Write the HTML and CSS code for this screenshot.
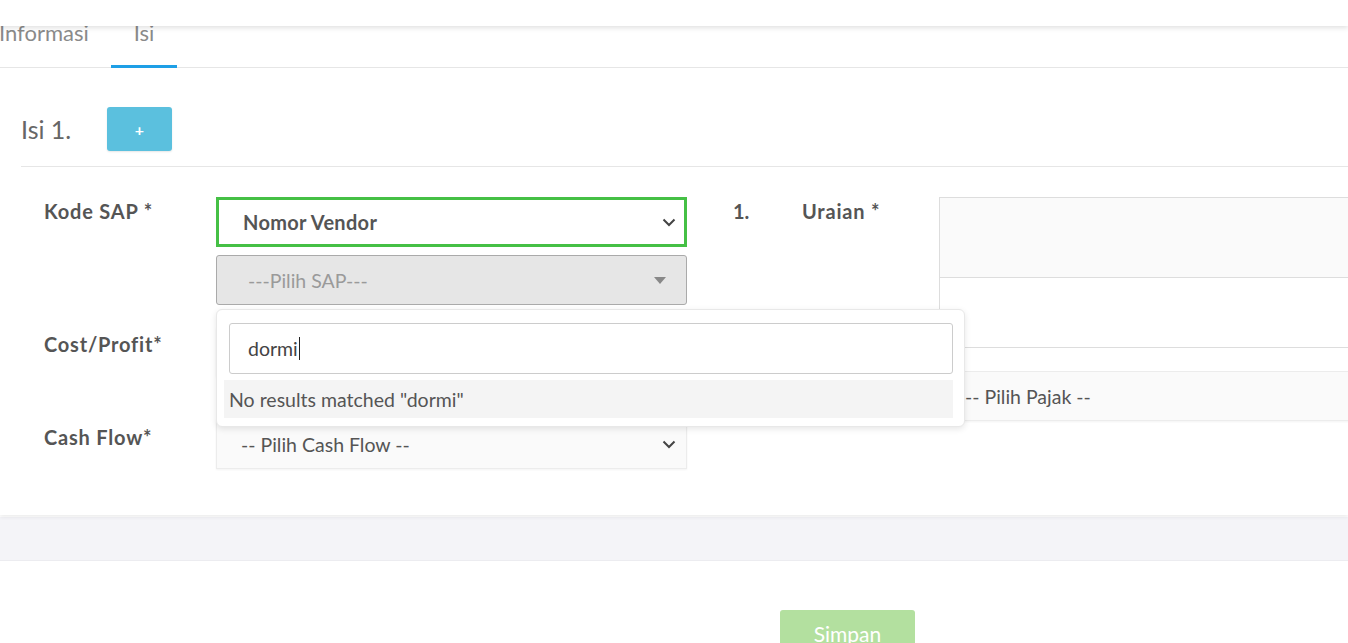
FILE: index.html
```html
<!DOCTYPE html>
<html>
<head>
<meta charset="utf-8">
<link rel="stylesheet" href="styles.css">
</head>
<body>
<div class="page">
  <div class="topbar"></div>
  <div class="card">
    <ul class="tabs">
      <li class="tab">Informasi</li>
      <li class="tab active">Isi</li>
    </ul>
    <div class="section-head">
      <h3 class="section-title">Isi 1.</h3>
      <button class="btn-add">+</button>
    </div>
    <div class="form">
      <div class="col-left">
        <div class="row row-sap">
          <label class="lbl">Kode SAP *</label>
          <div class="field">
            <div class="select select-focus">
              <span class="val-bold">Nomor Vendor</span>
              <svg class="chev" width="14" height="9" viewBox="0 0 14 9"><path d="M1.5 1.5 L7 7 L12.5 1.5" fill="none" stroke="#444" stroke-width="2"/></svg>
            </div>
            <div class="chosen">
              <span>---Pilih SAP---</span>
              <svg class="tri" width="12" height="7" viewBox="0 0 12 7"><path d="M0 0 H12 L6 7 Z" fill="#888"/></svg>
            </div>
            <div class="dropdown">
              <div class="search"><span class="typed">dormi</span></div>
              <div class="noresult">No results matched "dormi"</div>
            </div>
          </div>
        </div>
        <div class="row row-cost">
          <label class="lbl">Cost/Profit*</label>
          <div class="field">
            <div class="select plain"></div>
          </div>
        </div>
        <div class="row row-cash">
          <label class="lbl">Cash Flow*</label>
          <div class="field">
            <div class="select plain">
              <span>-- Pilih Cash Flow --</span>
              <svg class="chev" width="14" height="9" viewBox="0 0 14 9"><path d="M1.5 1.5 L7 7 L12.5 1.5" fill="none" stroke="#444" stroke-width="2"/></svg>
            </div>
          </div>
        </div>
      </div>
      <div class="col-right">
        <div class="num">1.</div>
        <label class="lbl lbl-uraian">Uraian *</label>
        <div class="rfield">
          <div class="textarea-wrap">
            <div class="textarea"></div>
          </div>
          <div class="select plain pajak"><span>-- Pilih Pajak --</span></div>
        </div>
      </div>
    </div>
  </div>
  <div class="band"></div>
  <div class="footer">
    <button class="btn-save">Simpan</button>
  </div>
</div>
</body>
</html>
```
FILE: styles.css
```css
html, body {
  margin: 0;
  padding: 0;
  background: #fff;
  font-family: "Lato", "Liberation Sans", sans-serif;
  overflow: hidden;
}
.page {
  width: 1348px;
  overflow: hidden;
}
.topbar {
  height: 26px;
  background: #fff;
  box-shadow: 0 2px 5px rgba(0,0,0,0.12);
  position: relative;
  z-index: 5;
}
.card {
  display: flow-root;
  background: #fff;
  height: 489px;
  box-shadow: 0 2px 4px rgba(0,0,0,0.08);
  position: relative;
  z-index: 2;
}
.tabs {
  list-style: none;
  margin: -8px 0 0 -23px;
  padding: 0;
  display: flex;
  border-bottom: 1px solid #e6e6e6;
  width: 1400px;
}
.tab {
  font-size: 22px;
  color: #8a8a8a;
  padding: 0 22px;
  height: 49px;
  line-height: 30px;
  box-sizing: border-box;
}
.tab.active {
  border-bottom: 3px solid #1e9fe6;
  margin-bottom: -1px;
  height: 50px;
  padding: 0 23px;
}
.section-head {
  display: flex;
  align-items: center;
  margin-left: 21px;
  padding-top: 39px;
  padding-bottom: 15px;
  border-bottom: 1px solid #e6e6e6;
}
.section-title {
  margin: 0;
  font-weight: 400;
  font-size: 25px;
  color: #666;
  width: 86px;
}
.btn-add {
  width: 65px;
  height: 44px;
  border: none;
  border-radius: 3px;
  background: #5bc0de;
  color: #fff;
  font-size: 16px;
  font-family: inherit;
  font-weight: 700;
  box-shadow: 0 1px 2px rgba(0,0,0,0.1);
}
.form {
  display: flex;
  padding-top: 30px;
}
.col-left {
  width: 689px;
  padding-left: 44px;
  box-sizing: border-box;
}
.row {
  display: flex;
}
.lbl {
  width: 172px;
  font-weight: 700;
  font-size: 20px;
  letter-spacing: 0.8px;
  color: #555;
  padding-top: 2px;
}
.field {
  width: 471px;
  position: relative;
}
.select {
  height: 50px;
  box-sizing: border-box;
  display: flex;
  align-items: center;
  justify-content: space-between;
  font-size: 19.5px;
  color: #555;
}
.select-focus {
  border: 3px solid #45c045;
  background: #fff;
  padding: 0 8px 0 24px;
}
.val-bold {
  font-weight: 700;
  font-size: 20px;
  letter-spacing: 0.3px;
  color: #555;
}
.plain {
  border: 1px solid #ececec;
  background: #fafafa;
  padding: 0 10px 0 24px;
  box-shadow: 0 1px 2px rgba(0,0,0,0.05);
}
.chosen {
  margin-top: 8px;
  height: 50px;
  box-sizing: border-box;
  border: 1px solid #aaa;
  border-radius: 3px;
  background: #e6e6e6;
  display: flex;
  align-items: center;
  justify-content: space-between;
  padding: 0 20px 0 31px;
  font-size: 19.5px;
  color: #9a9a9a;
}
.dropdown {
  position: absolute;
  left: 0;
  top: 112px;
  width: 749px;
  height: 118px;
  box-sizing: border-box;
  background: #fff;
  border: 1px solid #e8e8e8;
  border-radius: 6px;
  box-shadow: 0 2px 6px rgba(0,0,0,0.1);
  z-index: 10;
  padding: 13px 11px 0 7px;
}
.search {
  margin-left: 5px;
  height: 51px;
  box-sizing: border-box;
  border: 1px solid #ccc;
  border-radius: 3px;
  display: flex;
  align-items: center;
  padding-left: 18px;
  font-size: 19.5px;
  color: #444;
}
.typed {
  border-right: 1px solid #222;
  padding-right: 1px;
  line-height: 23px;
}
.noresult {
  margin-top: 6px;
  height: 38px;
  background: #f4f4f4;
  display: flex;
  align-items: center;
  padding-left: 5px;
  font-size: 19.5px;
  color: #555;
}
.row-cost {
  margin-top: 22px;
}
.row-cost .lbl {
  padding-top: 5px;
}
.row-cash {
  margin-top: 42px;
}
.row-cash .lbl {
  padding-top: 6px;
}
.row-cash .select {
  padding-left: 24px;
}
.col-right {
  display: flex;
  padding-left: 46px;
}
.num {
  width: 69px;
  font-weight: 700;
  font-size: 20px;
  color: #555;
  padding-top: 2px;
}
.lbl-uraian {
  width: 137px;
}
.rfield {
  width: 480px;
}
.textarea-wrap {
  height: 151px;
  border-left: 1px solid #ddd;
  border-bottom: 1px solid #ddd;
  box-sizing: border-box;
}
.textarea {
  height: 81px;
  box-sizing: border-box;
  border: 1px solid #ddd;
  border-left: none;
  background: #fafafa;
}
.pajak {
  margin-top: 23px;
  padding-left: 25px;
}
.band {
  height: 43px;
  background: #f4f4f8;
  margin-top: 2px;
  border-bottom: 1px solid #ececf0;
}
.footer {
  height: 120px;
  background: #fff;
  padding-left: 780px;
  padding-top: 49px;
  box-sizing: border-box;
}
.btn-save {
  width: 135px;
  height: 44px;
  border: none;
  border-radius: 3px;
  background: #b3e09f;
  color: #fff;
  font-size: 21px;
  font-family: inherit;
  padding-top: 4px;
}
```
